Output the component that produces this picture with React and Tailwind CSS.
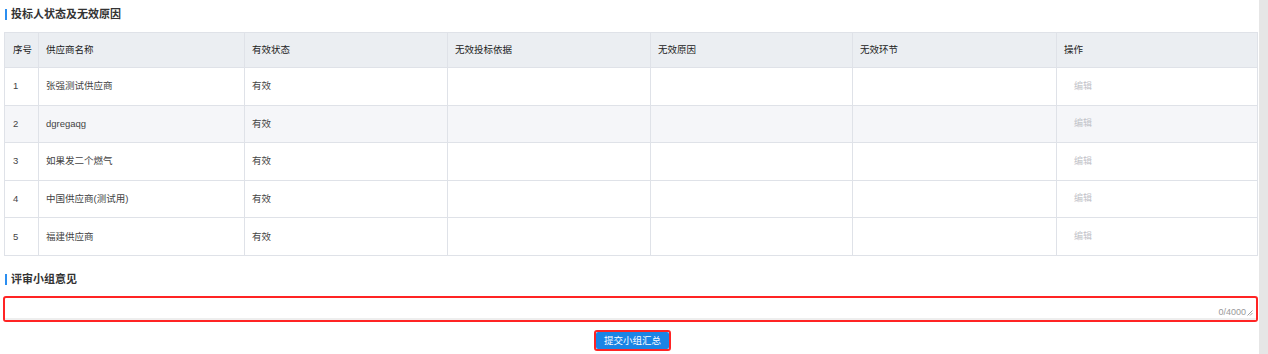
const FONT = "font-['Liberation_Sans','Noto_Sans_CJK_SC',sans-serif]";

const rows = [
  { no: 1, name: '张强测试供应商', status: '有效' },
  { no: 2, name: 'dgregaqg', status: '有效' },
  { no: 3, name: '如果发二个燃气', status: '有效' },
  { no: 4, name: '中国供应商(测试用)', status: '有效' },
  { no: 5, name: '福建供应商', status: '有效' },
];

const headers = ['序号', '供应商名称', '有效状态', '无效投标依据', '无效原因', '无效环节', '操作'];

function SectionTitle({ children }) {
  return (
    <div className="flex items-center gap-[4px] pl-[1px]">
      <span className="w-[2px] h-[11px] bg-[#2b8ef0]" />
      <span className="text-[11px] font-bold text-[#333] leading-none">{children}</span>
    </div>
  );
}

export default function App() {
  return (
    <div className={`flex w-[1268px] h-[354px] bg-white overflow-hidden ${FONT}`}>
      <div className="flex-1 flex flex-col pl-[4px] pr-[1px]">
        <div className="h-[32px] flex items-center pb-[4px]">
          <SectionTitle>投标人状态及无效原因</SectionTitle>
        </div>

        <table className="w-full table-fixed border-collapse text-[9.5px]">
          <colgroup>
            <col className="w-[34px]" />
            <col className="w-[206px]" />
            <col className="w-[203px]" />
            <col className="w-[203px]" />
            <col className="w-[202px]" />
            <col className="w-[204px]" />
            <col />
          </colgroup>
          <thead>
            <tr className="h-[35px] bg-[#ebeef2]">
              {headers.map((h, i) => (
                <th
                  key={h}
                  className={`border border-[#dfe2e8] text-left font-normal text-[#222] whitespace-nowrap ${
                    i === 0 ? 'pl-[8px] pr-0' : 'px-[7px]'
                  }`}
                >
                  {h}
                </th>
              ))}
            </tr>
          </thead>
          <tbody>
            {rows.map((r, i) => (
              <tr key={r.no} className={`h-[37.6px] ${i === 1 ? 'bg-[#f5f6f9]' : 'bg-white'}`}>
                <td className="border border-[#dfe2e8] pl-[8px] text-[#444]">{r.no}</td>
                <td className="border border-[#dfe2e8] px-[7px] text-[#444] whitespace-nowrap">{r.name}</td>
                <td className="border border-[#dfe2e8] px-[7px] text-[#444]">{r.status}</td>
                <td className="border border-[#dfe2e8]" />
                <td className="border border-[#dfe2e8]" />
                <td className="border border-[#dfe2e8]" />
                <td className="border border-[#dfe2e8] pl-[17px] text-[#bfc2c8] text-[9px]">编辑</td>
              </tr>
            ))}
          </tbody>
        </table>

        <div className="h-[40px] flex items-center pt-[8px]">
          <SectionTitle>评审小组意见</SectionTitle>
        </div>

        <div className="-ml-[1px] h-[26px] border-2 border-[#ff2424] rounded-[3px] relative">
          <div className="absolute left-0 right-0 bottom-0 h-[2px] bg-[#eeeeee]" />
          <div className="absolute right-[3px] bottom-[3px] flex items-end gap-[1px] text-[9px] text-[#999] leading-none">
            <span>0/4000</span>
            <svg width="6" height="6" viewBox="0 0 6 6" className="mb-[1px]">
              <path d="M5.5 0.5 L0.5 5.5 M5.5 3 L3 5.5" stroke="#888" strokeWidth="0.8" />
            </svg>
          </div>
        </div>

        <div className="flex justify-center pt-[8px]">
          <div className="border-2 border-[#ff2424] rounded-[3px] ml-[3px]">
            <button className="w-[73px] h-[17px] bg-[#1b84e4] rounded-[2px] text-white text-[9.5px] leading-none flex items-center justify-center">
              提交小组汇总
            </button>
          </div>
        </div>
      </div>
      <div className="w-[9px] bg-[#e6e6e6]" />
    </div>
  );
}
